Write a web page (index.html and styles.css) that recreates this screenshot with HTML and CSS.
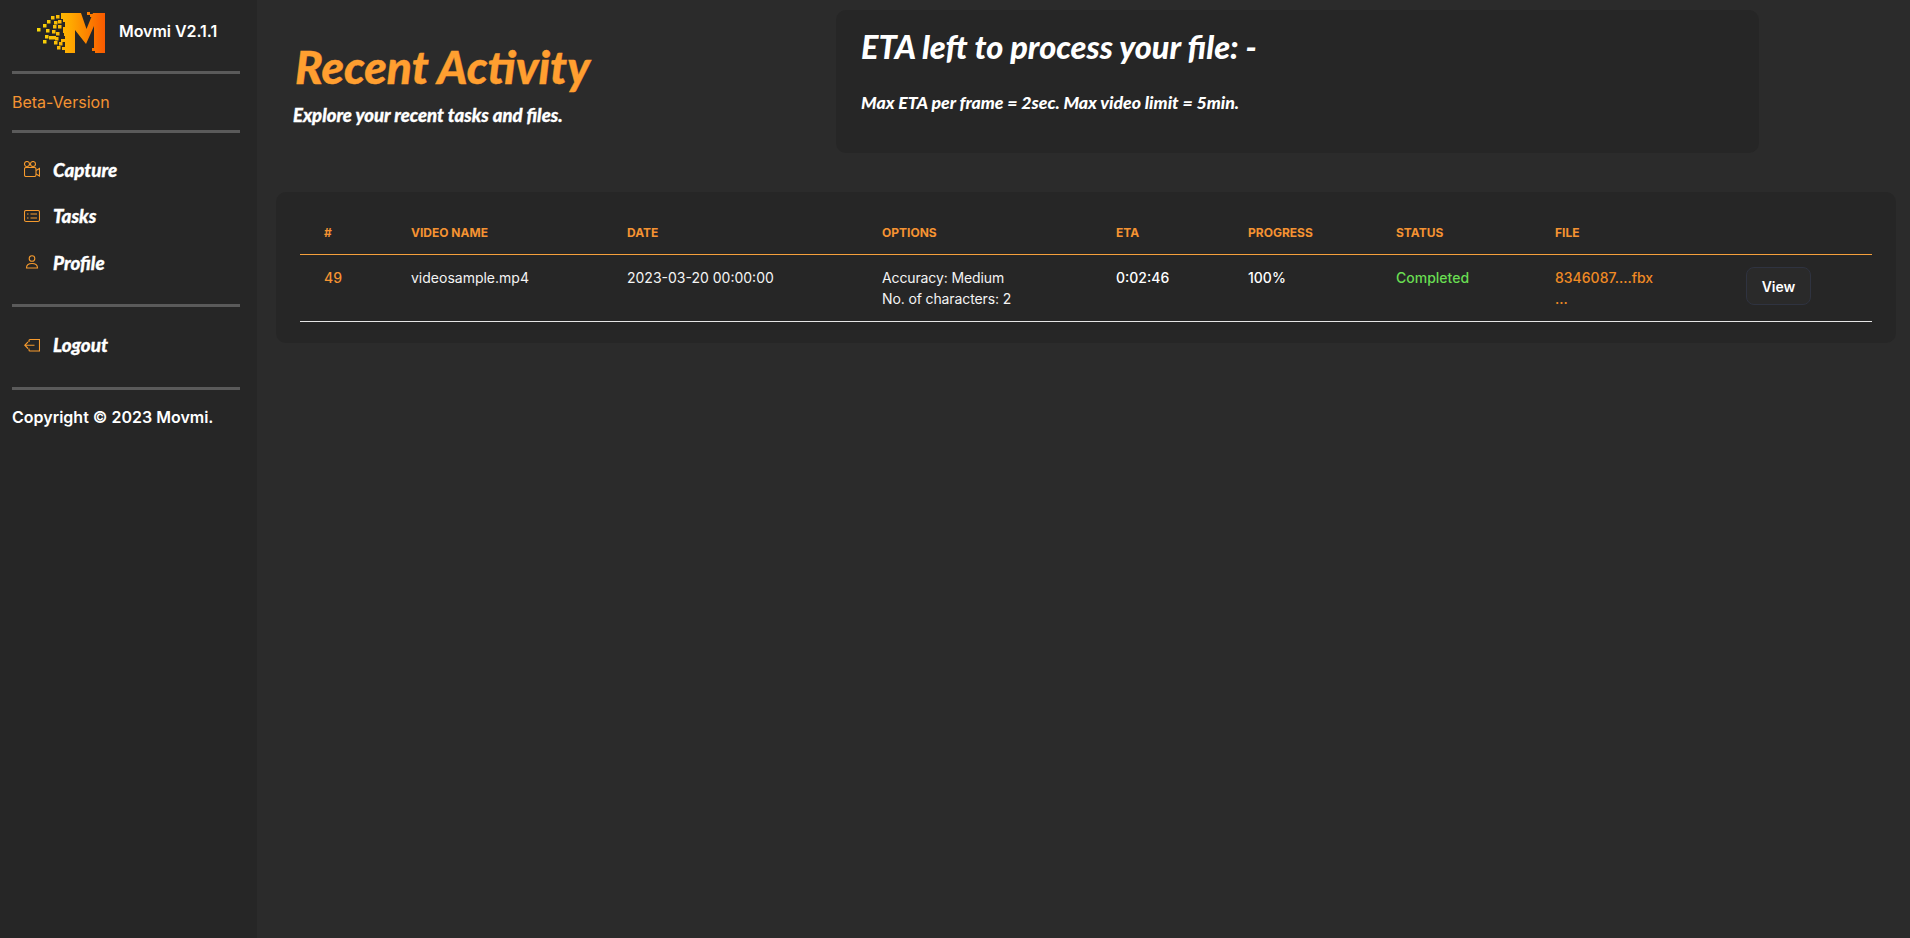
FILE: index.html
```html
<!DOCTYPE html>
<html lang="en">
<head>
<meta charset="utf-8">
<title>Movmi</title>
<link rel="stylesheet" href="styles.css">
</head>
<body>
<div class="app">
  <aside class="sidebar">
    <div class="brand">
      <svg class="logo" width="68" height="41" viewBox="0 0 68 41">
        <defs>
          <linearGradient id="lg" gradientUnits="userSpaceOnUse" x1="0" y1="0" x2="68" y2="0">
            <stop offset="0" stop-color="#f5d90a"/>
            <stop offset="0.5" stop-color="#ffa800"/>
            <stop offset="1" stop-color="#f95a00"/>
          </linearGradient>
        </defs>
        <g fill="url(#lg)">
          <path d="M24 1H44L49.5 17L56 1H68V41H58V39H55V36H57V14L49 32L38 18V41H28V38H25V35H28V30H24V27H28V24H27V21H26V15H28V10H26V7H24Z"/>
          <rect x="50" y="0" width="3" height="3"/><rect x="53" y="2" width="3" height="3"/>
          <rect x="19" y="3" width="3.5" height="3.5"/><rect x="14" y="4" width="3.5" height="3.5"/>
          <rect x="21" y="8" width="3.5" height="3.5"/><rect x="10" y="8" width="3.5" height="3.5"/><rect x="17" y="9" width="3.5" height="3.5"/>
          <rect x="6" y="12" width="3.5" height="3.5"/><rect x="16" y="13" width="3.5" height="3.5"/><rect x="21" y="13" width="3.5" height="3.5"/>
          <rect x="0" y="16" width="3.5" height="3.5"/><rect x="9" y="17" width="3.5" height="3.5"/><rect x="15" y="18" width="3.5" height="3.5"/>
          <rect x="19" y="20" width="3.5" height="3.5"/><rect x="8" y="23" width="3.5" height="3.5"/>
          <rect x="12" y="24" width="7" height="3.5"/><rect x="18" y="25" width="3.5" height="3.5"/><rect x="6" y="28" width="3.5" height="3.5"/>
          <rect x="17" y="29" width="3.5" height="3.5"/><rect x="22" y="30" width="3.5" height="3.5"/><rect x="20" y="34" width="3.5" height="3.5"/>
        </g>
      </svg>
      <span class="brand-name">Movmi V2.1.1</span>
    </div>
    <hr class="rule">
    <div class="beta">Beta-Version</div>
    <hr class="rule">
    <nav class="nav">
      <a class="nav-item">
        <svg class="icon" viewBox="0 0 16 16"><circle cx="3" cy="3" r="2.5"/><circle cx="9" cy="3" r="2.5"/><rect x="0.5" y="6.5" width="11.5" height="9" rx="1.5"/><path d="M12 9.5L15.5 7.5V15L12 13"/></svg>
        <span>Capture</span>
      </a>
      <a class="nav-item">
        <svg class="icon" viewBox="0 0 16 16"><rect x="0.5" y="2.5" width="15" height="11" rx="1.5"/><path d="M6.5 6H13M6.5 10H13M3 6H4.5M3 10H4.5"/></svg>
        <span>Tasks</span>
      </a>
      <a class="nav-item">
        <svg class="icon" viewBox="0 0 16 16"><circle cx="8" cy="4.5" r="2.8"/><path d="M2.5 14C2.5 10.5 5 9.5 8 9.5S13.5 10.5 13.5 14Z"/></svg>
        <span>Profile</span>
      </a>
    </nav>
    <hr class="rule">
    <nav class="nav nav-logout">
      <a class="nav-item">
        <svg class="icon" viewBox="0 0 16 16"><path d="M5 5V3.5C5 2.8 5.5 2.5 6 2.5H15.5V14H6C5.5 14 5 13.7 5 13V11.5"/><path d="M10.5 8.2H1M4 5L0.8 8.2L4 11.5"/></svg>
        <span>Logout</span>
      </a>
    </nav>
    <hr class="rule">
    <div class="copyright">Copyright © 2023 Movmi.</div>
  </aside>
  <main class="main">
    <header class="top">
      <div class="intro">
        <h1 class="title">Recent Activity</h1>
        <p class="subtitle">Explore your recent tasks and files.</p>
      </div>
      <section class="eta">
        <h2 class="eta-title">ETA left to process your file: -</h2>
        <p class="eta-note">Max ETA per frame = 2sec. Max video limit = 5min.</p>
      </section>
    </header>
    <section class="card">
      <table class="table">
        <thead>
          <tr>
            <th class="c-id">#</th><th class="c-name">Video name</th><th class="c-date">Date</th><th class="c-opt">Options</th><th class="c-eta">ETA</th><th class="c-prog">Progress</th><th class="c-status">Status</th><th class="c-file">File</th><th class="c-act"></th>
          </tr>
        </thead>
        <tbody>
          <tr>
            <td class="id">49</td>
            <td>videosample.mp4</td>
            <td>2023-03-20 00:00:00</td>
            <td class="opt">Accuracy: Medium<br>No. of characters: 2</td>
            <td class="strong">0:02:46</td>
            <td class="strong">100%</td>
            <td class="done">Completed</td>
            <td class="file">8346087....fbx<br>...</td>
            <td class="act"><button class="btn" type="button">View</button></td>
          </tr>
        </tbody>
      </table>
    </section>
  </main>
</div>
</body>
</html>
```
FILE: styles.css
```css
* { box-sizing: border-box; }
html, body { margin: 0; height: 100%; }
body {
  background: #2b2b2b;
  color: #fff;
  font-family: Inter, "Liberation Sans", sans-serif;
  overflow: hidden;
}
.app { display: flex; height: 938px; }

.sidebar {
  width: 257px;
  flex: none;
  background: #262626;
  padding: 12px 17px 0 12px;
}
.brand { display: flex; align-items: center; height: 41px; padding-left: 25px; }
.logo { flex: none; margin-right: 14px; }
.brand-name { font-size: 16px; font-weight: 600; letter-spacing: -0.05px; margin-bottom: 4px; }
.rule { border: 0; height: 3px; background: #5a5a5a; margin: 0; }
.sidebar > .rule:first-of-type { margin-top: 18px; }
.beta { color: #f59332; font-size: 16px; height: 56px; line-height: 56px; margin-top: 0; }
.nav { display: flex; flex-direction: column; padding: 13px 0 18px; }
.nav-logout { padding: 15px 0 19px; }
.nav-item { display: flex; align-items: center; height: 46.5px; padding-left: 12px; }
.nav-logout .nav-item { height: 46px; }
.icon {
  width: 16px; height: 16px; flex: none; margin-right: 13px;
  fill: none; stroke: #f59a2e; stroke-width: 1.1;
}
.nav-item span {
  font-family: Lato, "Noto Sans", sans-serif;
  font-weight: 900; font-style: italic; font-size: 18.8px; color: #fff;
  -webkit-text-stroke: 0.3px #fff;
}
.copyright { font-size: 16px; font-weight: 600; margin-top: 17px; }

.main { flex: 1; min-width: 0; padding: 10px 14px 0 19px; }
.top { display: flex; }
.intro { width: 560px; padding: 32px 0 0 19px; flex: none; }
.title {
  margin: 0; color: #ff9f30;
  font-family: Lato, "Noto Sans", sans-serif;
  font-weight: 900; font-style: italic; font-size: 46px; line-height: 50px;
  -webkit-text-stroke: 0.4px #ff9f30;
}
.subtitle {
  margin: 12px 0 0 -2px;
  font-family: Lato, "Noto Sans", sans-serif;
  font-weight: 900; font-style: italic; font-size: 18.5px; line-height: 22px;
  -webkit-text-stroke: 0.3px #fff;
}
.eta {
  width: 923px; height: 143px; flex: none;
  background: #262626; border-radius: 10px;
  padding: 18px 25px;
}
.eta-title {
  margin: 0;
  font-family: Lato, "Noto Sans", sans-serif;
  font-weight: 900; font-style: italic; font-size: 32.5px; line-height: 38px;
}
.eta-note {
  margin: 26px 0 0;
  font-family: Lato, "Noto Sans", sans-serif;
  font-weight: 900; font-style: italic; font-size: 17.7px; line-height: 22px;
}

.card {
  margin-top: 39px;
  background: #262626; border-radius: 10px;
  padding: 24px 24px 21px;
}
.table { width: 1572px; border-collapse: collapse; table-layout: fixed; }
.table th {
  text-align: left; color: #f59332; font-size: 12px; font-weight: 700;
  text-transform: uppercase; padding: 9px 24px 14px; line-height: 15px; vertical-align: top;
  border-bottom: 1px solid #f5a03c;
}
.table td {
  font-size: 14px; line-height: 21px; padding: 12px 24px; vertical-align: top;
  border-bottom: 1px solid #e6e6e6; color: #f4f4f4; white-space: nowrap;
}
.c-id { width: 87px; } .c-name { width: 216px; } .c-date { width: 255px; }
.c-opt { width: 234px; } .c-eta { width: 132px; } .c-prog { width: 148px; }
.c-status { width: 159px; } .c-file { width: 191px; } .c-act { width: 150px; }
.table td.opt { letter-spacing: -0.12px; }
.table td.id { color: #f59332; font-weight: 500; }
.table td.strong { color: #fff; font-weight: 500; }
.table td.done { color: #69dd52; font-weight: 500; }
.table td.file { color: #f08a24; font-weight: 500; }
.table td.act { vertical-align: top; padding: 12px 24px 0; }
.btn {
  display: block; width: 65px; height: 38px; padding: 0;
  background: #2a2a2a; color: #fff; border: 1px solid #2f3340; border-radius: 8px;
  font: 600 14px Inter, "Liberation Sans", sans-serif;
}
```
